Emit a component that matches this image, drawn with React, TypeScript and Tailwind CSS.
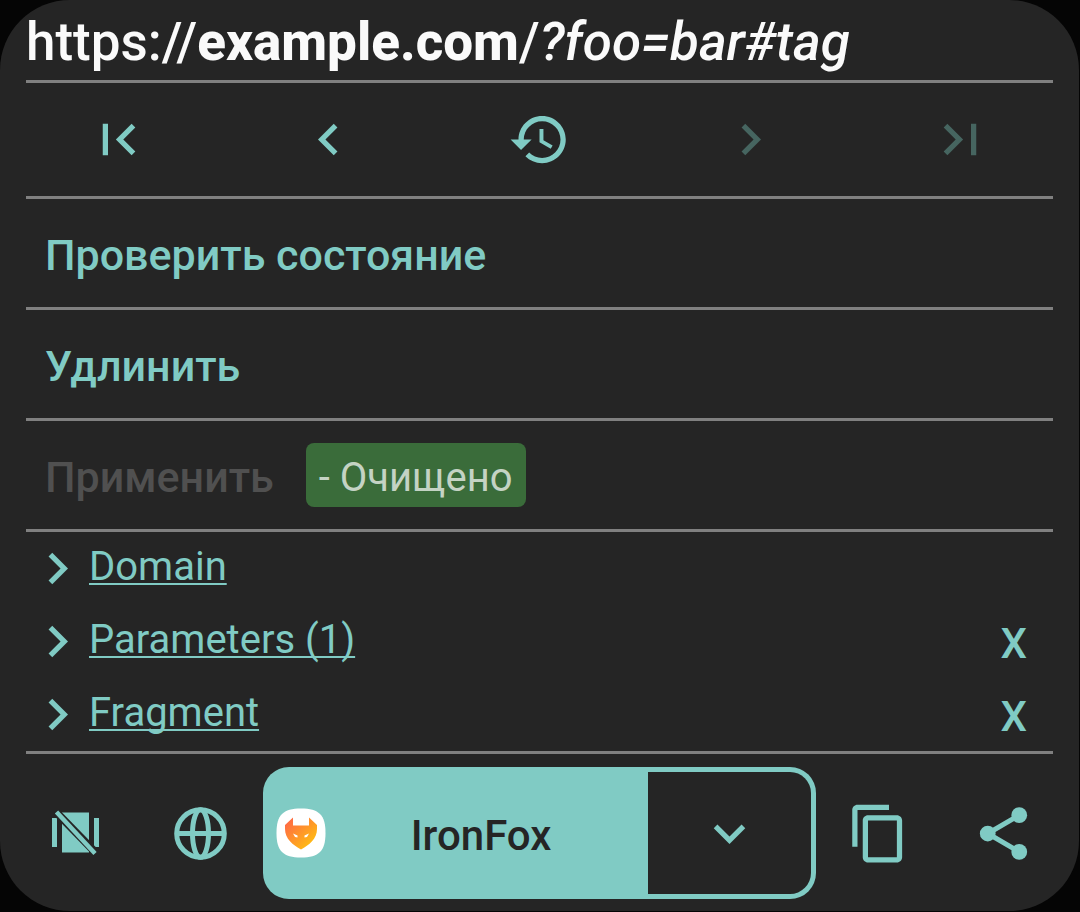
import React from "react";

type IconProps = { d: string };

function Icon({ d }: IconProps) {
  return (
    <svg viewBox="0 0 24 24" className="size-[63px] shrink-0 fill-current" aria-hidden="true">
      <path d={d} />
    </svg>
  );
}

const FIRST = "M18.41 16.59L13.82 12l4.59-4.59L17 6l-6 6 6 6zM6 6h2v12H6z";
const PREV = "M15.41 7.41L14 6l-6 6 6 6 1.41-1.41L10.83 12z";
const HISTORY =
  "M13 3c-4.97 0-9 4.03-9 9H1l3.89 3.89.07.14L9 12H6c0-3.87 3.13-7 7-7s7 3.13 7 7-3.13 7-7 7c-1.93 0-3.68-.79-4.94-2.06l-1.42 1.42C8.27 19.99 10.51 21 13 21c4.97 0 9-4.03 9-9s-4.03-9-9-9zm-1 5v5l4.28 2.54.72-1.21-3.5-2.08V8H12z";
const NEXT = "M10 6L8.59 7.41 13.17 12l-4.58 4.59L10 18l6-6z";
const LAST = "M5.59 7.41L10.18 12l-4.59 4.59L7 18l6-6-6-6zM16 6h2v12h-2z";
const EXPAND = "M16.59 8.59L12 13.17 7.41 8.59 6 10l6 6 6-6z";
const COPY =
  "M16 1H4c-1.1 0-2 .9-2 2v14h2V3h12V1zm3 4H8c-1.1 0-2 .9-2 2v14c0 1.1.9 2 2 2h11c1.1 0 2-.9 2-2V7c0-1.1-.9-2-2-2zm0 16H8V7h11v14z";

const navigation = [
  { label: "First", d: FIRST, disabled: false },
  { label: "Previous", d: PREV, disabled: false },
  { label: "History", d: HISTORY, disabled: false },
  { label: "Next", d: NEXT, disabled: true },
  { label: "Last", d: LAST, disabled: true },
];

const parts = [
  { label: "Domain", removable: false },
  { label: "Parameters (1)", removable: true },
  { label: "Fragment", removable: true },
];

function Divider() {
  return <hr className="mx-[26px] h-[3px] border-0 bg-[#808080]" />;
}

function ActionRow({ children }: { children: React.ReactNode }) {
  return <div className="flex h-[108px] items-center gap-8 px-[45px]">{children}</div>;
}

function NoTabsIcon() {
  return (
    <svg viewBox="0 0 63 63" className="size-[63px]" aria-hidden="true">
      <path className="fill-current" d="M8 16h5v29H8zM50 16h5v29h-5zM18 10.500h27v40H18z" />
      <path d="M12 10L52 51" fill="none" stroke="#252525" strokeWidth="8" />
      <path d="M12.500 10L51 51.500" fill="none" stroke="currentColor" strokeWidth="4.500" />
    </svg>
  );
}

function GlobeIcon() {
  return (
    <svg viewBox="0 0 63 63" className="size-[63px]" fill="none" stroke="currentColor" strokeWidth="5" aria-hidden="true">
      <circle cx="31.5" cy="31.5" r="23.800" />
      <ellipse cx="31.5" cy="31.5" rx="8" ry="23.800" />
      <path d="M8 31.500h47" />
    </svg>
  );
}

function ShareIcon() {
  return (
    <svg viewBox="0 0 24 24" className="size-[63px]" fill="currentColor" aria-hidden="true">
      <path d="M18 5L6 12l12 7" fill="none" stroke="currentColor" strokeWidth="1.9" />
      <circle cx="18" cy="5" r="3" />
      <circle cx="6" cy="12" r="3" />
      <circle cx="18" cy="19" r="3" />
    </svg>
  );
}

function FoxIcon() {
  return (
    <svg viewBox="0 0 50 50" className="size-[50px] shrink-0" aria-hidden="true">
      <defs>
        <linearGradient id="fox" x1="0.1" y1="0.1" x2="0.8" y2="0.8">
          <stop offset="0" stopColor="#ff6b45" />
          <stop offset="1" stopColor="#ffb814" />
        </linearGradient>
      </defs>
      <path d="M25 0.500C43 0.500 49.500 7 49.500 25S43 49.500 25 49.500 0.500 43 0.500 25 7 0.500 25 0.500z" fill="#fff" />
      <path d="M17 9.500V17.500H33V9.500L41 17V21C41 31 33 37 25 41.500C17 37 9 31 9 21V17z" fill="url(#fox)" />
      <path d="M17 25.500l4.500 2v2l-2.500-.5zM33 25.500l-4.500 2v2l2.500-.5z" fill="#fff" />
    </svg>
  );
}

export default function App() {
  return (
    <div className="min-h-screen bg-[#050505] font-['Roboto','Noto_Sans',sans-serif] text-[#80cbc4]">
      <main className="mr-px min-h-[calc(100vh-1px)] rounded-[70px] bg-[#252525] pb-3">
        <h1 className="flex h-20 items-center px-[26px] pt-1 text-[53px] leading-none font-medium whitespace-pre text-[#fafafa]">
          <span>
            https://<b className="font-extrabold">example.com</b>/<i>?foo=bar#tag</i>
          </span>
        </h1>
        <Divider />
        <nav className="grid h-[113px] grid-cols-5 px-[13px]">
          {navigation.map(({ label, d, disabled }) => (
            <button
              key={label}
              aria-label={label}
              disabled={disabled}
              className="flex items-center justify-center disabled:text-[#466560]"
            >
              <Icon d={d} />
            </button>
          ))}
        </nav>
        <Divider />
        <ActionRow>
          <button className="pt-1 text-[43px] leading-none font-medium">Проверить состояние</button>
        </ActionRow>
        <Divider />
        <ActionRow>
          <button className="pt-1 text-[43px] leading-none font-medium">Удлинить</button>
        </ActionRow>
        <Divider />
        <ActionRow>
          <button disabled className="pt-1 text-[43px] leading-none font-medium text-[#505050]">
            Применить
          </button>
          <span className="flex h-16 items-center rounded-lg bg-[#3a6c3a] px-[13px] pt-1.5 text-[40px] leading-none text-[#c4d3c4]">
            - Очищено
          </span>
        </ActionRow>
        <Divider />
        <ul>
          {parts.map(({ label, removable }) => (
            <li key={label} className="flex h-[73px] items-center justify-between pr-[52px] pl-[26px]">
              <button className="flex items-center text-[40px] leading-none">
                <Icon d={NEXT} />
                <span className="pb-1 underline decoration-2 underline-offset-3 [text-decoration-skip-ink:none]">
                  {label}
                </span>
              </button>
              {removable && (
                <button aria-label={`X ${label}`} className="pt-1 text-[42px] leading-none font-medium">
                  X
                </button>
              )}
            </li>
          ))}
        </ul>
        <Divider />
        <footer className="mt-[13px] flex h-[132px] items-stretch px-[13px]">
          <button aria-label="Disable custom tabs" className="flex w-[125px] items-center justify-center">
            <NoTabsIcon />
          </button>
          <button aria-label="Web" className="flex w-[125px] items-center justify-center">
            <GlobeIcon />
          </button>
          <div className="grid flex-1 grid-cols-[7fr_3fr] rounded-[26px] bg-[#80cbc4] p-[5px]">
            <button className="flex items-center pl-2 text-[42px] leading-none font-medium text-[#252525]">
              <FoxIcon />
              <span className="flex-1 pt-1.5 pr-3">IronFox</span>
            </button>
            <button
              aria-label="Choose app"
              className="flex items-center justify-center rounded-r-[21px] bg-[#252525]"
            >
              <Icon d={EXPAND} />
            </button>
          </div>
          <button aria-label="Copy" className="flex w-[125px] items-center justify-center">
            <Icon d={COPY} />
          </button>
          <button aria-label="Share" className="flex w-[125px] items-center justify-center">
            <ShareIcon />
          </button>
        </footer>
      </main>
    </div>
  );
}
